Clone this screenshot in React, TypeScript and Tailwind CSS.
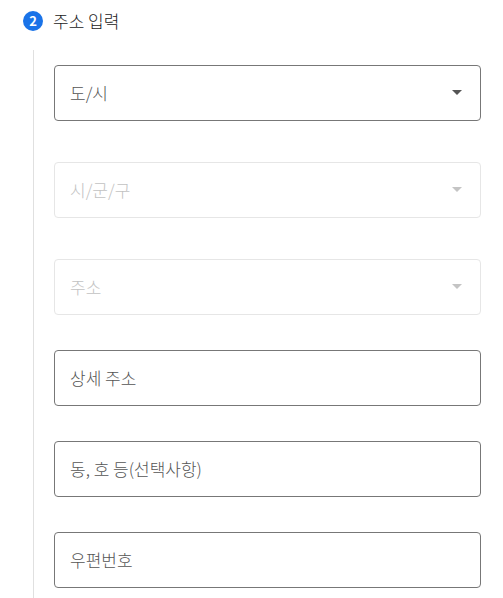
const font = { fontFamily: '"Noto Sans CJK KR", "Noto Sans", sans-serif' };

function Caret({ disabled }: { disabled?: boolean }) {
  return (
    <svg width="10" height="5" viewBox="0 0 10 5" className="shrink-0">
      <path d="M0 0h10L5 5z" fill={disabled ? '#c4c4c4' : '#555555'} />
    </svg>
  );
}

function SelectBox({ label, disabled, className }: { label: string; disabled?: boolean; className?: string }) {
  return (
    <div
      className={`flex h-[56px] items-center justify-between rounded-[4px] border pl-[15px] pr-[18px] ${
        disabled ? 'border-[#e6e6e6] text-[#c2c2c2]' : 'border-[#777777] text-[#555555]'
      } ${className ?? ''}`}
    >
      <span className="text-[17px] font-light">{label}</span>
      <Caret disabled={disabled} />
    </div>
  );
}

function InputBox({ placeholder, className }: { placeholder: string; className?: string }) {
  return (
    <div className={`flex h-[56px] items-center rounded-[4px] border border-[#777777] pl-[15px] ${className ?? ''}`}>
      <span className="text-[17px] font-light text-[#555555]">{placeholder}</span>
    </div>
  );
}

export default function App() {
  return (
    <div className="min-h-screen bg-white" style={font}>
      <div className="flex items-center gap-[10px] pl-[23px] pt-[8px]">
        <div className="flex h-[20px] w-[20px] items-center justify-center rounded-full bg-[#1a73e8] text-[13px] font-bold text-white">
          2
        </div>
        <h2 className="text-[17px] font-light text-[#222222]">주소 입력</h2>
      </div>

      <div className="ml-[33px] mt-[16px] border-l border-[#e0e0e0] pl-[20px] pr-[22px] pt-[15px] pb-[11px]">
        <SelectBox label="도/시" />
        <SelectBox label="시/군/구" disabled className="mt-[41px]" />
        <SelectBox label="주소" disabled className="mt-[41px]" />
        <InputBox placeholder="상세 주소" className="mt-[35px]" />
        <InputBox placeholder="동, 호 등(선택사항)" className="mt-[35px]" />
        <InputBox placeholder="우편번호" className="mt-[35px]" />
      </div>
    </div>
  );
}
